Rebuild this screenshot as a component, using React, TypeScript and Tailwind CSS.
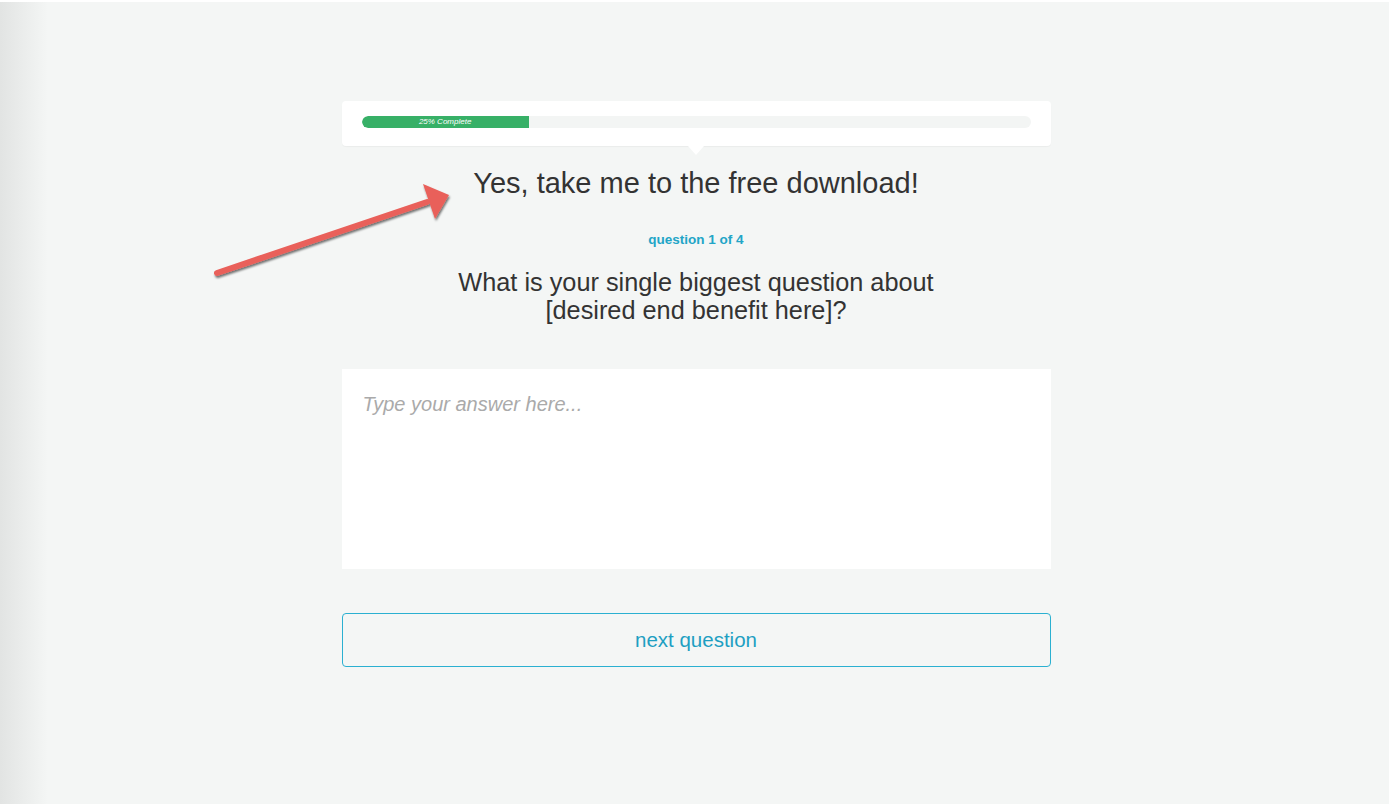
import React from "react";

const Arrow = () => (
  <svg
    className="absolute left-[205px] top-[182px]"
    width="260"
    height="110"
    viewBox="0 0 260 110"
  >
    <defs>
      <filter id="sh" x="-20%" y="-50%" width="140%" height="200%">
        <feDropShadow dx="1" dy="2" stdDeviation="1.2" floodColor="#000" floodOpacity="0.55" />
      </filter>
    </defs>
    <g filter="url(#sh)">
      <line x1="12" y1="91" x2="222" y2="20" stroke="#e9605a" strokeWidth="6" strokeLinecap="round" />
      <polygon points="244,13 218,2 230,37" fill="#e9605a" />
    </g>
  </svg>
);

const App = () => {
  return (
    <div
      className="relative min-h-screen h-[804px] overflow-hidden bg-[#f4f6f5] flex flex-col items-center"
      style={{ fontFamily: '"Liberation Sans", Arial, sans-serif' }}
    >
      <div className="absolute inset-y-0 left-0 w-[48px] bg-gradient-to-r from-[#e2e4e3] to-[#f4f6f5]" />
      <div className="absolute inset-x-0 top-0 h-[2px] bg-white" />
      <div className="absolute inset-y-0 right-0 w-[3px] bg-white" />

      <div className="relative w-[709px] mt-[101px] flex flex-col items-center">
        <div className="relative w-full bg-white rounded-sm shadow-[0_1px_1px_rgba(0,0,0,0.04)] px-5 pt-[15px] pb-[18px]">
          <div className="h-[12px] w-full rounded-full bg-[#f3f5f4] overflow-hidden">
            <div className="h-full w-1/4 bg-[#37b067] rounded-l-full flex items-center justify-center">
              <span className="text-[8px] leading-none italic text-white">25% Complete</span>
            </div>
          </div>
          <div className="absolute left-1/2 -bottom-[9px] -translate-x-1/2 w-0 h-0 border-x-[8px] border-x-transparent border-t-[9px] border-t-white" />
        </div>

        <h1 className="mt-[20px] text-[29px] leading-[34px] text-[#333]">
          Yes, take me to the free download!
        </h1>

        <p className="mt-[32px] text-[13.5px] leading-4 font-bold text-[#22a5c7]">question 1 of 4</p>

        <h2 className="mt-[20px] text-[25.3px] leading-[28px] text-[#333] text-center">
          What is your single biggest question about
          <br />
          [desired end benefit here]?
        </h2>

        <textarea
          className="mt-[45px] w-full h-[200px] bg-white resize-none outline-none px-[21px] py-[20px] text-[20px] italic text-[#555] placeholder:text-[#aaa]"
          placeholder="Type your answer here..."
        />

        <button className="mt-[44px] w-full h-[54px] rounded border border-[#2bb0d1] text-[20.5px] text-[#1e9fc2]">
          next question
        </button>
      </div>

      <Arrow />
    </div>
  );
};

export default App;
